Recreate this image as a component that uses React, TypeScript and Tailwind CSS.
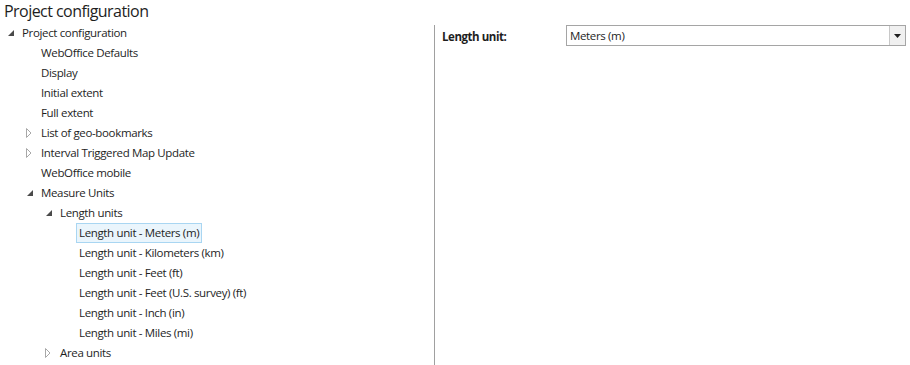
import React from 'react';

type Node = {
  label: string;
  level: number;
  arrow?: 'open' | 'closed';
  selected?: boolean;
};

const nodes: Node[] = [
  { label: 'Project configuration', level: 0, arrow: 'open' },
  { label: 'WebOffice Defaults', level: 1 },
  { label: 'Display', level: 1 },
  { label: 'Initial extent', level: 1 },
  { label: 'Full extent', level: 1 },
  { label: 'List of geo-bookmarks', level: 1, arrow: 'closed' },
  { label: 'Interval Triggered Map Update', level: 1, arrow: 'closed' },
  { label: 'WebOffice mobile', level: 1 },
  { label: 'Measure Units', level: 1, arrow: 'open' },
  { label: 'Length units', level: 2, arrow: 'open' },
  { label: 'Length unit - Meters (m)', level: 3, selected: true },
  { label: 'Length unit - Kilometers (km)', level: 3 },
  { label: 'Length unit - Feet (ft)', level: 3 },
  { label: 'Length unit - Feet (U.S. survey) (ft)', level: 3 },
  { label: 'Length unit - Inch (in)', level: 3 },
  { label: 'Length unit - Miles (mi)', level: 3 },
  { label: 'Area units', level: 2, arrow: 'closed' },
];

const indent = ['pl-[3px]', 'pl-[22px]', 'pl-[41px]', 'pl-[60px]'];

const Arrow: React.FC<{ kind?: 'open' | 'closed' }> = ({ kind }) => {
  if (kind === 'open') {
    return (
      <svg width="6" height="6" viewBox="0 0 6 6" className="ml-[5px]">
        <polygon points="6,0 6,6 0,6" fill="#4a4a4a" />
      </svg>
    );
  }
  if (kind === 'closed') {
    return (
      <svg width="6" height="10" viewBox="0 0 6 10" className="ml-[4px]">
        <polygon points="0.5,0.5 5,5 0.5,9.5" fill="none" stroke="#a8a8a8" strokeWidth="1" />
      </svg>
    );
  }
  return null;
};

const TreeRow: React.FC<{ node: Node }> = ({ node }) => (
  <div className={`flex items-center h-5 ${indent[node.level]}`}>
    <div className="w-4 flex items-center shrink-0">
      <Arrow kind={node.arrow} />
    </div>
    <span
      className={
        node.selected
          ? 'h-5 flex items-center px-[2px] border border-[#a9d6f2] bg-[#eaf5fc]'
          : 'h-5 flex items-center px-[2px] border border-transparent'
      }
    >
      {node.label}
    </span>
  </div>
);

export default function App() {
  return (
    <div
      className="w-[910px] h-[365px] bg-white text-[#1e1e1e] overflow-hidden"
      style={{ fontFamily: '"Open Sans", "Noto Sans", sans-serif' }}
    >
      <h1 className="text-[16px] leading-[23px] tracking-[-0.55px] pl-[4px] h-[23px]">
        Project configuration
      </h1>

      <div className="flex h-[342px]">
        {/* Tree */}
        <div className="w-[434px] text-[11.5px] tracking-[-0.35px]">
          {nodes.map((n) => (
            <TreeRow key={n.label} node={n} />
          ))}
        </div>

        {/* Property panel */}
        <div className="flex-1 pt-[2px]">
          <div className="border-l border-[#a0a0a0] h-full pl-[7px] pr-[4px]">
            <div className="flex items-center h-[21px]">
              <div className="w-[124px] text-[11.5px] font-bold tracking-[-0.45px] pt-[3px]">
                Length unit:
              </div>
              <div className="flex-1 h-[21px] flex border border-[#a5a5a5]">
                <div className="flex-1 flex items-center px-[3px] text-[11.5px] tracking-[-0.35px]">
                  Meters (m)
                </div>
                <div className="w-[16px] bg-[#f0f0f0] border-l border-[#c8c8c8] flex items-center justify-center">
                  <svg width="7" height="4" viewBox="0 0 7 4">
                    <polygon points="0,0 7,0 3.5,4" fill="#1e1e1e" />
                  </svg>
                </div>
              </div>
            </div>
          </div>
        </div>
      </div>
    </div>
  );
}
